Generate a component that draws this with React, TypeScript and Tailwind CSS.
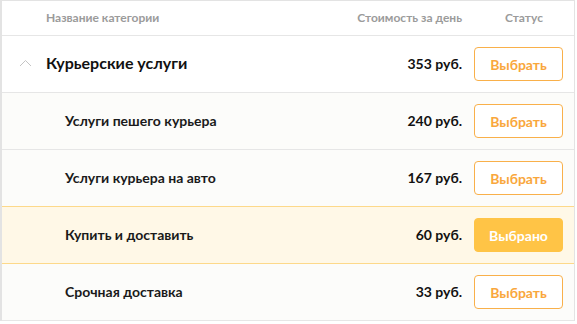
import { useState } from "react";

type Row = {
  name: string;
  price: number;
  sub?: boolean;
};

const rows: Row[] = [
  { name: "Курьерские услуги", price: 353 },
  { name: "Услуги пешего курьера", price: 240, sub: true },
  { name: "Услуги курьера на авто", price: 167, sub: true },
  { name: "Купить и доставить", price: 60, sub: true },
  { name: "Срочная доставка", price: 33, sub: true },
];

const ChevronUp = () => (
  <svg width="13" height="8" viewBox="0 0 13 8" fill="none" className="mr-[14px] -mt-[2px]">
    <path d="M1 7L6.5 1.5L12 7" stroke="#c4c4c4" strokeWidth="1" />
  </svg>
);

const App = () => {
  const [selected, setSelected] = useState(3);

  return (
    <div className="w-[577px] h-[324px] bg-white font-['Lato','Noto_Sans',sans-serif]">
      <div className="w-[575px] border border-l-2 border-[#e3e3e3] border-b-0">
        {/* header */}
        <div className="flex items-center h-[35px] border-b border-[#e6e6e6] text-[12px] font-bold text-[#9b9b9b]">
          <div className="flex-1 pl-[44px]">Название категории</div>
          <div className="pr-[12px]">Стоимость за день</div>
          <div className="w-[100px] text-center">Статус</div>
        </div>

        {rows.map((row, i) => {
          const isSel = selected === i;
          return (
            <div
              key={row.name}
              className={`flex items-center h-[57px] border-b ${
                isSel
                  ? "bg-[#fff8e7] border-[#fdd98a]"
                  : row.sub
                  ? "bg-[#fcfcfa] border-[#e6e6e6]"
                  : "bg-white border-[#e6e6e6]"
              } ${selected === i + 1 ? "border-[#fdd98a]" : ""}`}
            >
              <div className="flex-1 flex items-center">
                {row.sub ? (
                  <span className="pl-[63px] text-[14px] font-bold text-[#1a1a1a] -mt-[1px]">
                    {row.name}
                  </span>
                ) : (
                  <>
                    <span className="pl-[17px]">
                      <ChevronUp />
                    </span>
                    <span className="text-[16px] font-bold text-[#111] -mt-[2px]">{row.name}</span>
                  </>
                )}
              </div>
              <div className="pr-[12px] text-[14px] font-bold text-[#111] -mt-[1px]">{row.price} руб.</div>
              <div className="w-[100px] flex">
                <button
                  onClick={() => setSelected(i)}
                  className={`w-[89px] h-[34px] rounded-[4px] text-[14px] font-bold ${
                    isSel
                      ? "bg-[#ffc446] text-white border border-[#ffc446]"
                      : "bg-white text-[#f9a73c] border border-[#f9b04a]"
                  }`}
                >
                  {isSel ? "Выбрано" : "Выбрать"}
                </button>
              </div>
            </div>
          );
        })}
      </div>
    </div>
  );
};

export default App;
